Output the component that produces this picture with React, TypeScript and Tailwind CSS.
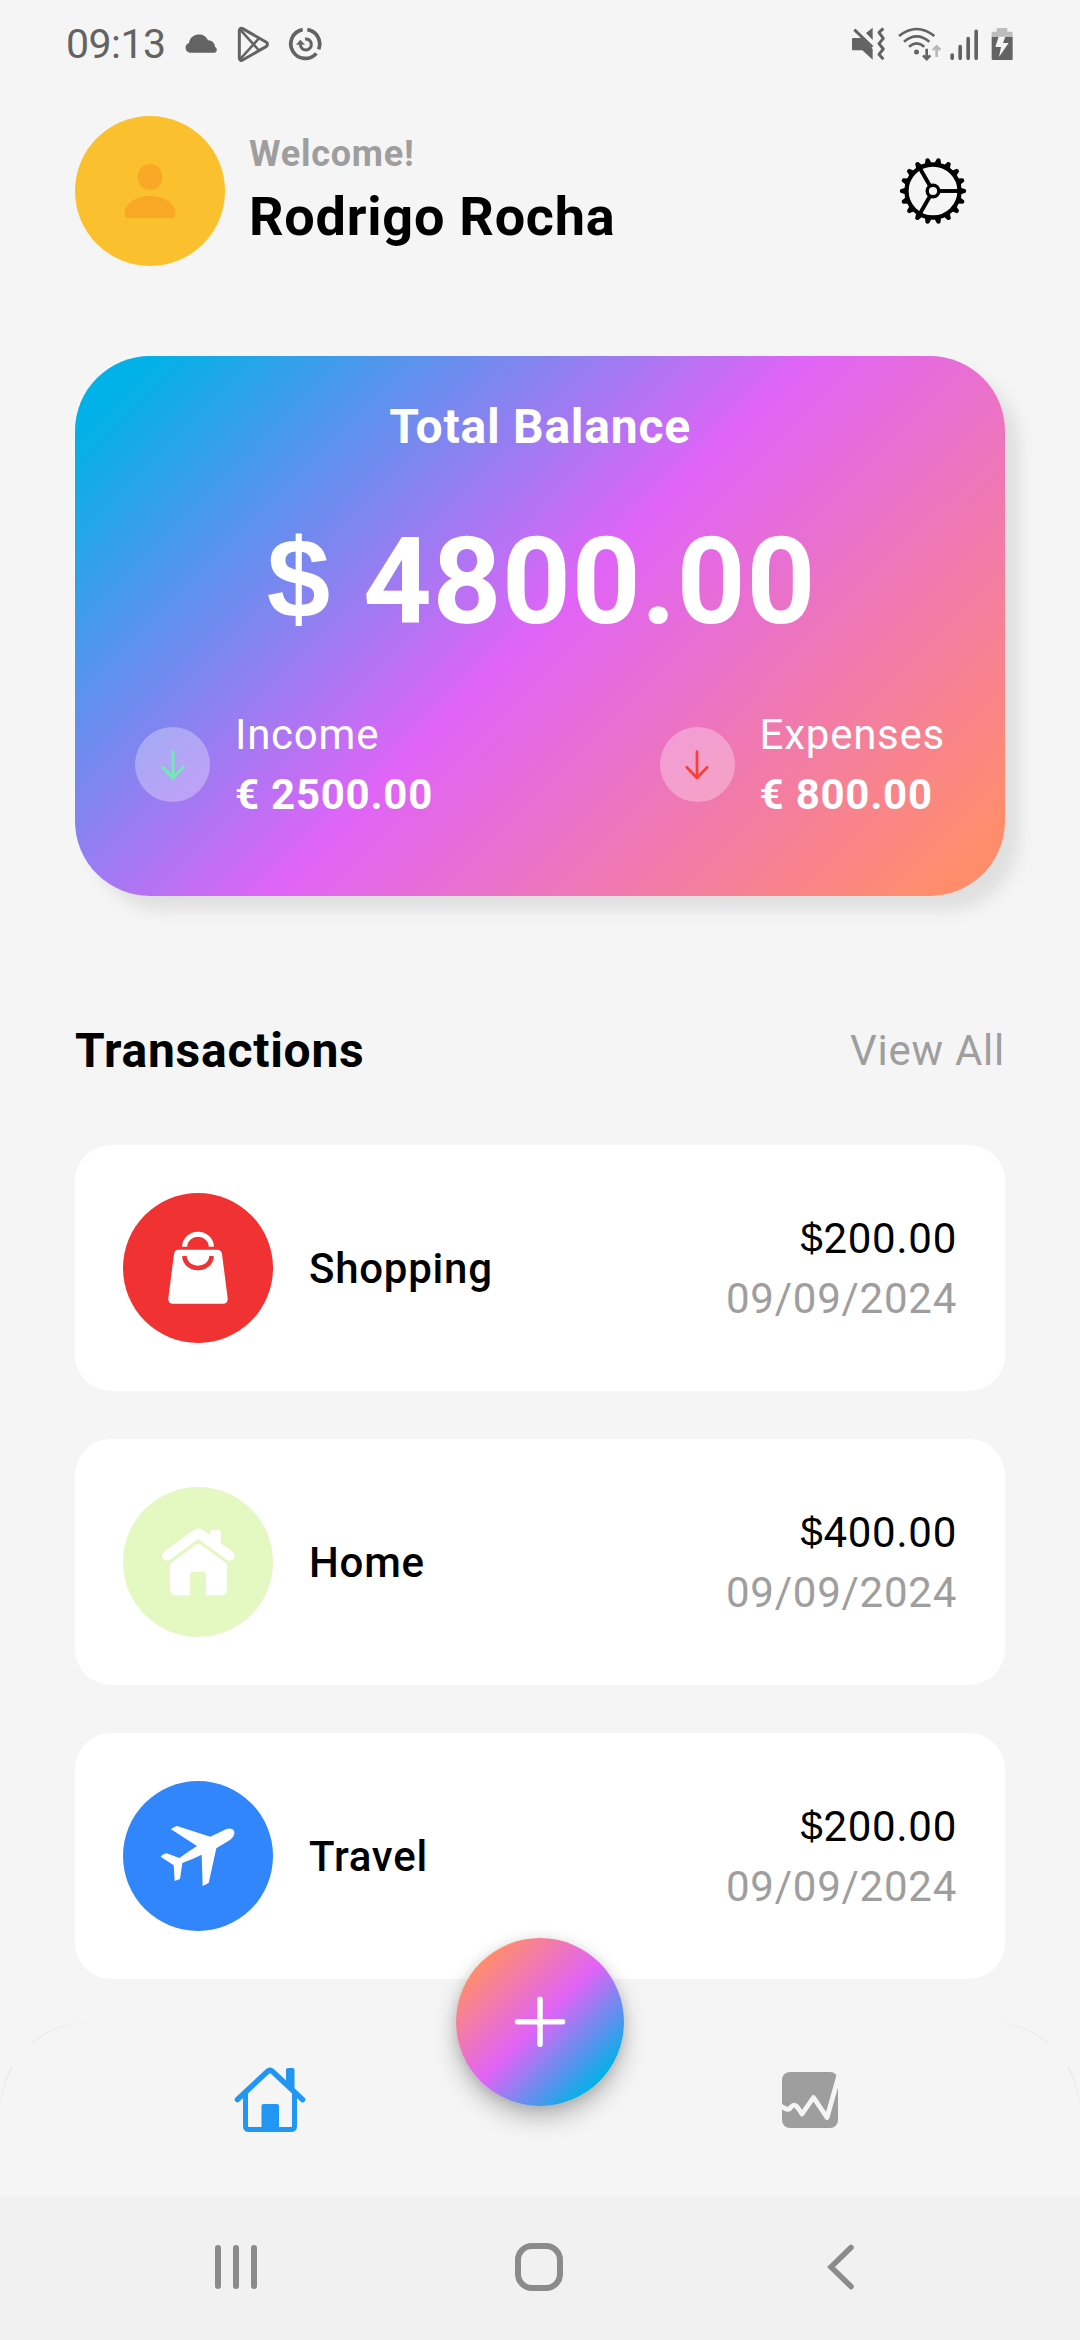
import type { ReactNode } from "react";

const teeth = Array.from({ length: 18 }, (_, i) => i * 20);

function StatusBar() {
  return (
    <div className="flex h-[116px] items-start justify-between pl-[66px] pr-[61.67px] text-[#636363]">
      <div className="flex h-[90px] items-start">
        <span className="mt-[20px] w-[117.33px] text-[41px] leading-[48px] tracking-[-0.5px]">09:13</span>
        <svg className="mt-[25px] h-10 w-10" viewBox="430 75 120 120" fill="currentColor">
          <path d="M450 158a15 15 0 0 1-2-29 30 30 0 0 1 57-8 19 19 0 0 1 21 19 10 10 0 0 1 0 18z" />
        </svg>
        <svg className="ml-[10px] mt-[25px] h-10 w-10" viewBox="580 75 120 120" fill="none" stroke="currentColor" strokeWidth="9" strokeLinejoin="round">
          <path d="M599 92v82c0 6 5 9 10 6l70-40c6-4 6-10 0-14l-70-40c-5-3-10 0-10 6z" />
          <path d="M601 88l56 62M601 178l56-62" strokeWidth="7.5" />
        </svg>
        <svg className="ml-[11.67px] mt-[25px] h-10 w-10" viewBox="735 75 120 120" fill="none" stroke="currentColor">
          <path d="M788 89A43.500 43.500 0 1 0 829 160M802 89A43.500 43.500 0 0 1 836 148" strokeWidth="11" />
          <path d="M795 117A16.500 16.500 0 1 1 781 134" strokeWidth="9" />
          <path d="M768 134l13-15 14 15z" fill="currentColor" stroke="none" />
        </svg>
      </div>
      <div className="mt-[25px] flex h-10">
        <svg className="h-10 w-10" viewBox="60 75 120 120" fill="currentColor">
          <path d="M68 114h26l34 33v32l-31-28H68q-2 0-2-3v-31q0-3 2-3zM108 99l20-16v37z" />
          <path d="M73 89l54 52" fill="none" stroke="currentColor" strokeWidth="9" />
          <path d="M160 85l-13 13 13 17-13 16 13 16-13 16 13 15" fill="none" stroke="currentColor" strokeWidth="9" strokeLinejoin="round" />
        </svg>
        <svg className="ml-[5px] h-10 w-[50px]" viewBox="195 75 150 120" fill="none" stroke="currentColor" strokeWidth="8">
          <path d="M207 108q53-42 106 0M222 125q38-32 76 0M237 140q23-20 46 0" />
          <circle cx="259.500" cy="156" r="7.500" fill="currentColor" stroke="none" />
          <path d="M290 146v30M279 166l11 11 11-11" />
          <path d="M320 171v-30M309 150l11-11 11 11" stroke="#b9b9b9" />
        </svg>
        <svg className="ml-[1.67px] h-10 w-[35px]" viewBox="350 75 105 120" fill="none" stroke="currentColor" strokeWidth="11" strokeLinecap="round">
          <path d="M365.500 165v10M389.500 140v35M413.500 116v59M437.500 94v81" />
        </svg>
        <svg className="ml-[6.67px] h-10 w-[30px]" viewBox="475 75 90 120">
          <path d="M486 112V98q0-3 3-3h12v-8q0-3 3-3h26q3 0 3 3v8h13q3 0 3 3v14z" fill="#bdbdbd" />
          <path d="M486 111h63v66q0 3-3 3h-57q-3 0-3-3z" fill="currentColor" />
          <path d="M507 110h20l-7 19h17l-29 42 6-30h-17z" fill="#f5f5f5" />
        </svg>
      </div>
    </div>
  );
}

function Gear() {
  return (
    <svg className="h-[72px] w-[72px]" viewBox="-36 -36 72 72" fill="none" stroke="black">
      <circle r="26.500" strokeWidth="4.300" />
      <circle r="5.800" strokeWidth="3.400" />
      {[0, 120, 240].map((a) => (
        <path key={a} d="M7 0H26" strokeWidth="3.900" transform={`rotate(${a})`} />
      ))}
      {teeth.map((a) => (
        <path key={a} d="M27-3.600L32.500-1.800Q34 0 32.500 1.800L27 3.600z" fill="black" stroke="none" transform={`rotate(${a})`} />
      ))}
    </svg>
  );
}

function Header() {
  return (
    <header className="flex h-[150px] items-center px-[75px]">
      <div className="h-[150px] w-[150px] rounded-full bg-[#fbc02d]">
        <svg className="h-full w-full" viewBox="0 0 150 150" fill="#f9a825">
          <ellipse cx="75" cy="61" rx="12.300" ry="13" />
          <path d="M49.500 98c0-12 13-18 25.500-18s25.500 6 25.500 18q0 4-4 4h-43q-4 0-4-4z" />
        </svg>
      </div>
      <div className="ml-6 flex flex-1 flex-col">
        <span className="pt-[2px] text-[36px] font-bold leading-[51px] tracking-[0.75px] text-[#9e9e9e]">Welcome!</span>
        <span className="pb-[1px] text-[54px] font-bold leading-[74px] tracking-[0.75px] text-black">Rodrigo Rocha</span>
      </div>
      <div className="flex h-36 w-36 items-center justify-center">
        <Gear />
      </div>
    </header>
  );
}

function Flow({ label, value, color }: { label: string; value: string; color: string }) {
  return (
    <div className="flex items-center">
      <div className="flex h-[75px] w-[75px] items-center justify-center rounded-full bg-white/30">
        <svg className="mt-[2px] h-9 w-9" viewBox="0 0 36 36" fill="none" stroke={color} strokeWidth="2.700" strokeLinecap="round" strokeLinejoin="round">
          <path d="M18 4.500v26M7.800 20.300L18 31l10.200-10.700" />
        </svg>
      </div>
      <div className="ml-[25px] flex flex-col pt-[2px] text-[42px] leading-[60px] tracking-[0.75px]">
        <span>{label}</span>
        <span className="font-bold">{value}</span>
      </div>
    </div>
  );
}

function BalanceCard() {
  return (
    <section className="mx-[75px] mt-[90px] flex h-[540px] flex-col rounded-[75px] bg-[linear-gradient(135deg,#00b2e7_5.25%,#e064f7_50%,#ff8d6c_94.75%)] px-[60px] pt-[37px] text-white shadow-[15px_15px_15px_#e0e0e0]">
      <div className="text-center text-[48px] font-bold leading-[68px] tracking-[0.75px]">Total Balance</div>
      <div className="mt-[35px] flex justify-center text-[120px] font-bold leading-[172px] tracking-[0.75px]">
        <span className="mr-[29px] w-[70px] text-center font-['Liberation_Sans',sans-serif] text-[114px] leading-[166px]">$</span>
        <span>4800.00</span>
      </div>
      <div className="mt-[35px] flex justify-between">
        <Flow label="Income" value="€ 2500.00" color="#69f0ae" />
        <Flow label="Expenses" value="€ 800.00" color="#f44336" />
      </div>
    </section>
  );
}

function Transaction({ name, amount, icon }: { name: string; amount: string; icon: ReactNode }) {
  return (
    <div className="flex h-[246px] items-center rounded-[36px] bg-white p-12 text-[42px] leading-[60px] tracking-[0.75px]">
      {icon}
      <span className="ml-9 flex-1 pt-[2px] font-medium text-black">{name}</span>
      <div className="flex flex-col items-end pt-[2px]">
        <span className="flex text-black">
          <span className="font-['Liberation_Sans',sans-serif] text-[40px] leading-[58px]">$</span>
          {amount}
        </span>
        <span className="text-[#9e9e9e]">09/09/2024</span>
      </div>
    </div>
  );
}

function BagIcon() {
  return (
    <svg className="h-[150px] w-[150px] rounded-full bg-[#f03233]" viewBox="39 69 450 450" fill="white">
      <path d="M206 239h115q13 0 15 13l17 133q1 16-14 16H189q-15 0-14-16l17-133q2-13 14-13z" />
      <path d="M224 230a40 37 0 0 1 80 0" fill="none" stroke="white" strokeWidth="15" />
      <path d="M223 258c4 48 78 48 82 0" fill="none" stroke="#f03233" strokeWidth="14" />
    </svg>
  );
}

function HouseIcon() {
  return (
    <svg className="h-[150px] w-[150px] rounded-full bg-[#e4f8c2]" viewBox="39 51 450 450" fill="white">
      <path d="M171 257l86-63q8-6 16 0l86 63" fill="none" stroke="white" strokeWidth="30" strokeLinecap="round" strokeLinejoin="round" />
      <path d="M301 186q0-6 6-6h19q6 0 6 6v45l-31-24z" />
      <path d="M180 281l76-56q9-6 18 0l77 56v75q0 20-20 20h-43v-61q0-9-9-9h-30q-9 0-9 9v61h-42q-18 0-18-20z" />
    </svg>
  );
}

function PlaneIcon() {
  return (
    <svg className="h-[150px] w-[150px] rounded-full bg-[#3186fb]" viewBox="39 63 450 450" fill="white">
      <path d="M183 208q8-8 18-10l100 32 48-23c16-6 29 4 23 18q-3 8-11 14l-42 26-23 104-18 9-3-94q-28 14-58 25l-7 48-16 6-3-47-39-26q7-9 18-10l38 14q25-18 53-36z" />
    </svg>
  );
}

function NavCorner() {
  return (
    <svg className="h-[90px] w-[90px]" viewBox="0 0 90 90" fill="none">
      <defs>
        <linearGradient id="cornerSide" gradientUnits="userSpaceOnUse" x1="0" y1="45" x2="0" y2="88">
          <stop offset="0" stopColor="#e3e3e3" />
          <stop offset="1" stopColor="#f1f1f1" />
        </linearGradient>
        <linearGradient id="cornerTop" gradientUnits="userSpaceOnUse" x1="32" y1="0" x2="88" y2="0">
          <stop offset="0" stopColor="#e3e3e3" />
          <stop offset="1" stopColor="#f4f4f4" />
        </linearGradient>
      </defs>
      <path d="M.5 86A90 90 0 0 1 12 45" stroke="url(#cornerSide)" />
      <path d="M32 20.500A90 90 0 0 1 86 .5" stroke="url(#cornerTop)" />
    </svg>
  );
}

function BottomNav() {
  return (
    <nav className="relative flex h-[174px] bg-[#f5f5f5]">
      <div className="absolute left-0 top-0">
        <NavCorner />
      </div>
      <div className="absolute right-0 top-0 -scale-x-100">
        <NavCorner />
      </div>
      <div className="flex w-1/2 justify-center pt-[42px]">
        <svg className="h-[72px] w-[72px]" viewBox="234 2064 72 72" fill="none" stroke="#2196f3" strokeLinecap="round" strokeLinejoin="round">
          <path d="M245.500 2095v31q0 3.500 3.500 3.500h42q3.500 0 3.500-3.500v-31" strokeWidth="5" />
          <path d="M237.500 2099.500l30-28q2.500-2.300 5 0l30 28" strokeWidth="5.500" />
          <path d="M286 2084v-14q0-2 2-2h4.500q2 0 2 2v22z" fill="#2196f3" stroke="none" />
          <path d="M261.500 2128v-22q0-2 2-2h13.500q2 0 2 2v22z" fill="#2196f3" stroke="none" />
        </svg>
      </div>
      <div className="flex w-1/2 justify-center pt-[42px]">
        <svg className="h-[72px] w-[72px]" viewBox="774 2064 72 72">
          <rect x="782" y="2072" width="56" height="56" rx="8" fill="#9e9e9e" />
          <path d="M780 2105.500l5 3q4 2 6-1.500 3.500-4 7 1l4 6 11.500-16.500L827 2117.500 838.500 2077l1-10" fill="none" stroke="#f5f5f5" strokeWidth="4.800" strokeLinejoin="round" />
        </svg>
      </div>
      <button className="absolute left-[456px] top-[-84px] flex h-[168px] w-[168px] items-center justify-center rounded-full bg-[linear-gradient(135deg,#ff8d6c_14.65%,#e064f7_50%,#00b2e7_85.35%)] shadow-[0_12px_24px_rgba(0,0,0,0.24),0_2px_12px_rgba(0,0,0,0.12)]">
        <svg className="h-[60px] w-[60px]" viewBox="0 0 60 60" fill="none" stroke="white" strokeWidth="5.500" strokeLinecap="round">
          <path d="M30 7.200V52.200M7.500 29.700H52.500" />
        </svg>
      </button>
    </nav>
  );
}

function SystemNav() {
  return (
    <div className="flex h-36 items-center justify-between bg-[#f1f1f1] px-[212px] pb-[2px]">
      <svg className="h-12 w-12" viewBox="0 0 48 48" fill="none" stroke="#8b8b8b" strokeWidth="6" strokeLinecap="round">
        <path d="M6 5v38M24 5v38M42 5v38" />
      </svg>
      <svg className="h-[54px] w-[54px]" viewBox="0 0 54 54" fill="none" stroke="#8b8b8b" strokeWidth="6">
        <rect x="5" y="6" width="42" height="42" rx="14" />
      </svg>
      <svg className="h-12 w-12" viewBox="0 0 48 48" fill="none" stroke="#8b8b8b" strokeWidth="5.500" strokeLinecap="round">
        <path d="M31 4.500L11 24l20 19.500" />
      </svg>
    </div>
  );
}

export default function App() {
  return (
    <div className="flex h-[2340px] w-[1080px] flex-col overflow-hidden bg-[#f5f5f5] font-[Roboto,sans-serif]">
      <StatusBar />
      <Header />
      <BalanceCard />
      <main className="flex flex-1 flex-col px-[75px] pt-[121px]">
        <div className="flex items-center justify-between">
          <h2 className="text-[48px] font-bold leading-[68px] tracking-[0.75px] text-black">Transactions</h2>
          <span className="text-[42px] leading-[60px] tracking-[0.75px] text-[#9e9e9e]">View All</span>
        </div>
        <div className="mt-[60px] flex flex-col gap-12">
          <Transaction name="Shopping" amount="200.00" icon={<BagIcon />} />
          <Transaction name="Home" amount="400.00" icon={<HouseIcon />} />
          <Transaction name="Travel" amount="200.00" icon={<PlaneIcon />} />
        </div>
      </main>
      <BottomNav />
      <SystemNav />
    </div>
  );
}
